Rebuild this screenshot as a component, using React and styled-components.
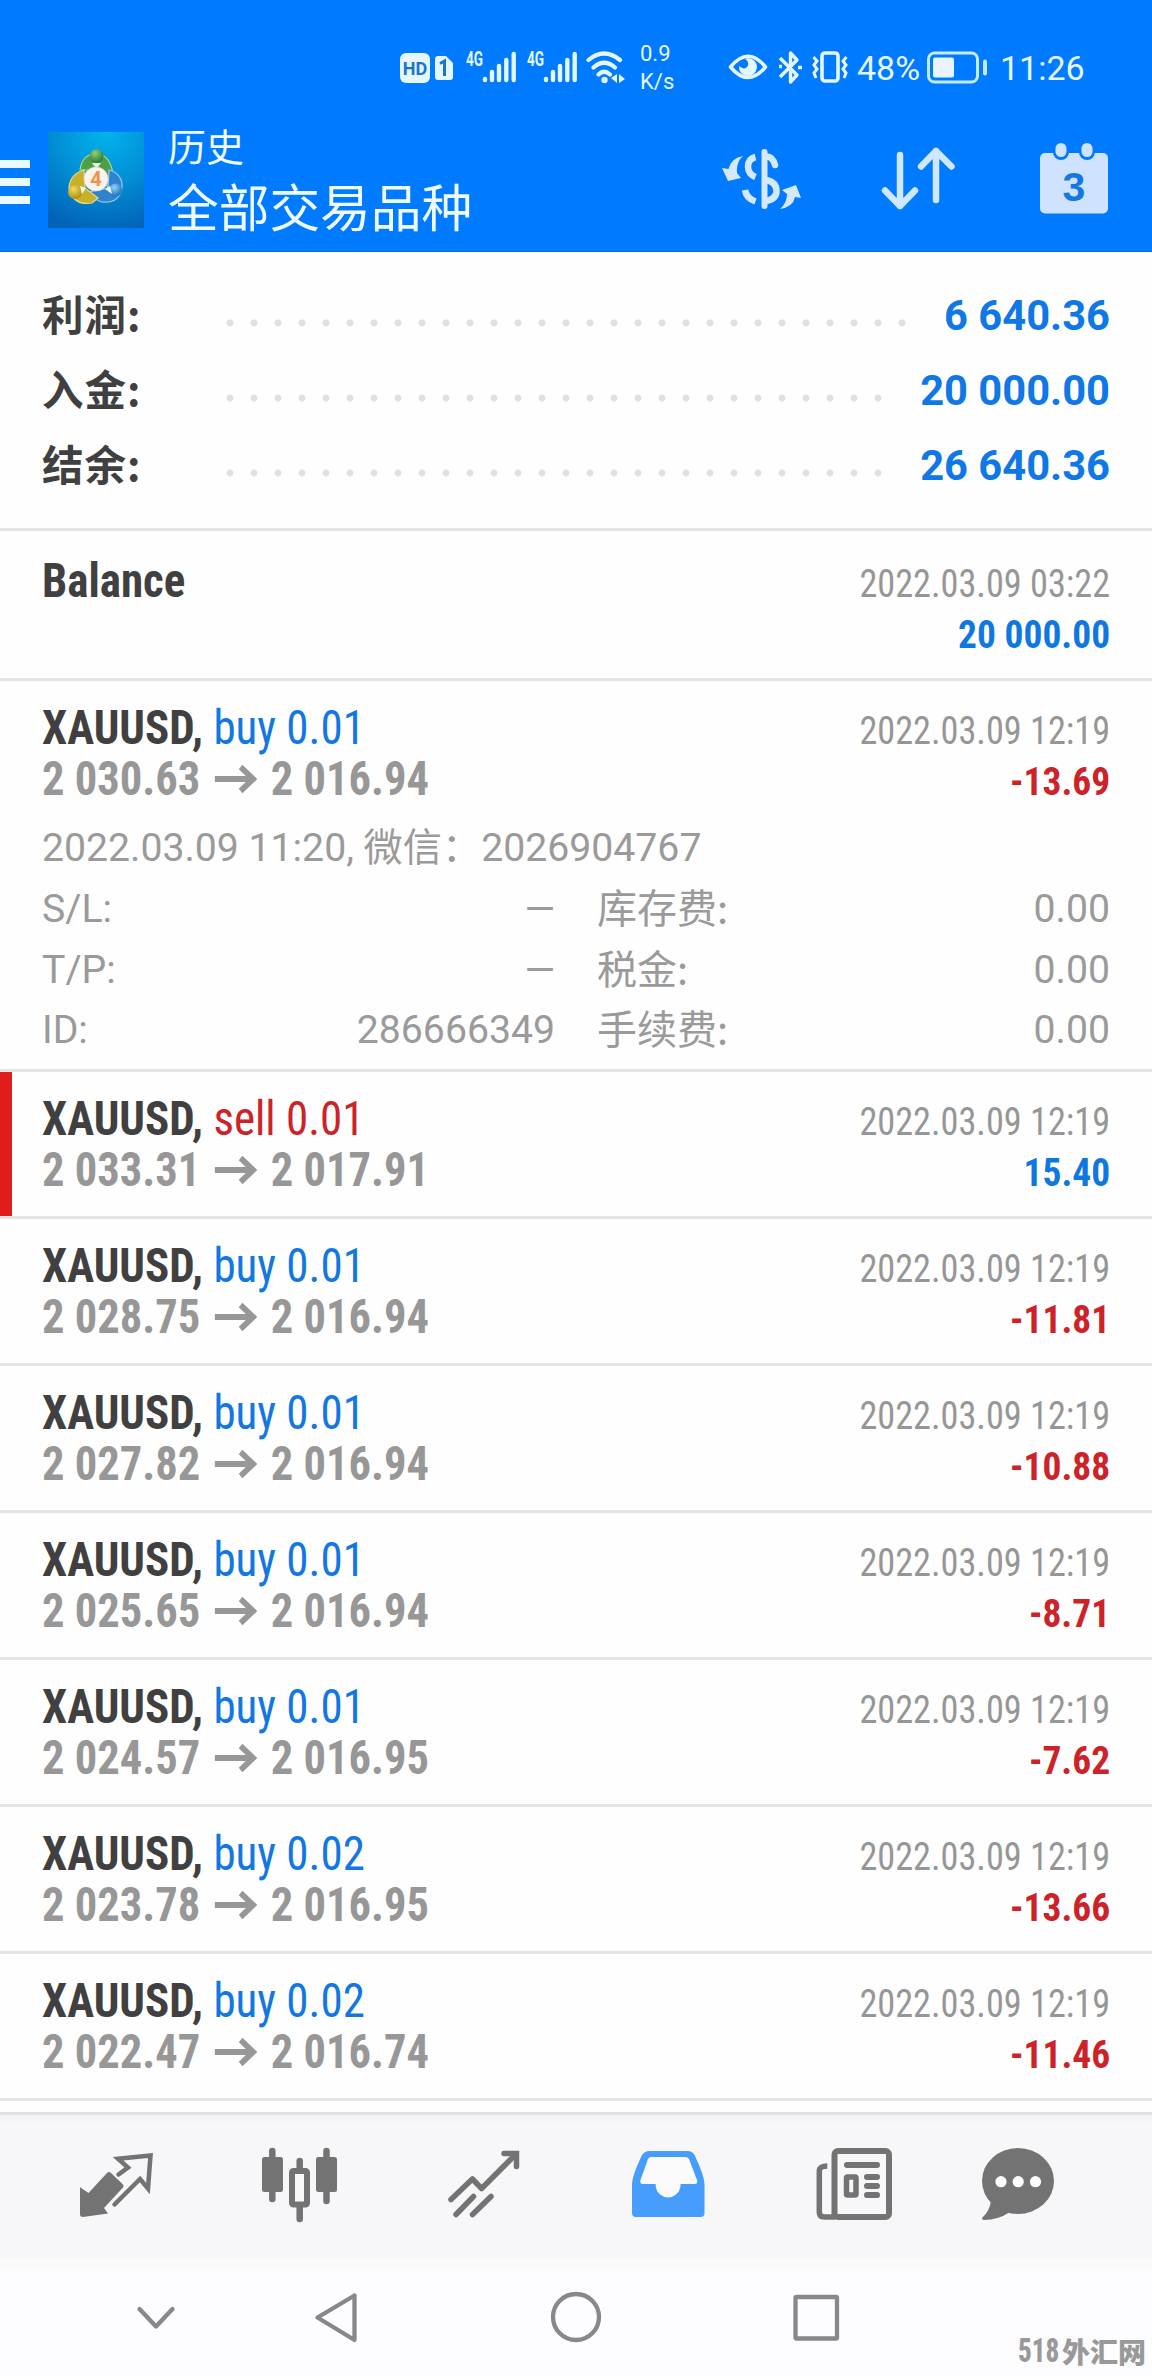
import React from "react";
import styled, { createGlobalStyle } from "styled-components";

const GlobalStyle = createGlobalStyle`
  * { box-sizing: border-box; }
  body { margin: 0; background: #fdfcfd; }
`;

const BLUE = "#007aff";
const sans = `Roboto, "Noto Sans CJK SC", sans-serif`;
const condensed = `"Roboto Condensed", Roboto, "Noto Sans CJK SC", sans-serif`;

const Screen = styled.div`
  position: relative;
  width: 1152px;
  height: 2376px;
  overflow: hidden;
  display: flex;
  flex-direction: column;
  background: #fefefe;
  font-family: ${sans};
  svg { display: block; flex: none; }
`;

/* ---------- status bar ---------- */
const StatusBar = styled.div`
  height: 108px;
  flex: none;
  padding: 28px 0 0 400px;
  display: flex;
  align-items: center;
  background: ${BLUE};
  color: #e4f6ff;
`;
const Slot = styled.div`
  flex: none;
  width: ${(p) => p.$w}px;
  margin-right: ${(p) => p.$gap || 0}px;
  white-space: nowrap;
`;
const HdBadge = styled.div`
  height: 30px;
  border-radius: 6px;
  background: #e4f6ff;
  color: #1c74c8;
  font: 700 18px/31px ${sans};
  text-align: center;
`;
const StatusText = styled.div`
  font-size: 34px;
  line-height: 40px;
`;
const Speed = styled.div`
  font-size: 22px;
  line-height: 28px;
`;

const Signal = () => (
  <svg width="52" height="42" viewBox="0 -3 52 42">
    <text x="1" y="16" fontSize="20" fontWeight="700" fontFamily="Roboto, sans-serif" textLength="17" lengthAdjust="spacingAndGlyphs" fill="#e4f6ff">4G</text>
    <g stroke="#e4f6ff" strokeWidth="4.4" strokeLinecap="round">
      <path d="M20 29v1M27 22v8M34 16v14M41.3 10v20M48.7 4v26" />
    </g>
  </svg>
);

/* ---------- app bar ---------- */
const AppBar = styled.div`
  height: 144px;
  flex: none;
  display: flex;
  align-items: center;
  background: ${BLUE};
  color: #eefcff;
  border-bottom: 1px solid #0b6fdc;
`;
const Burger = styled.div`
  width: 30px;
  height: 44px;
  margin: 4px 18px 0 0;
  display: flex;
  flex-direction: column;
  justify-content: space-between;
`;
const BurgerLine = styled.i`
  height: 8px;
  background: #e8faff;
`;
const Titles = styled.div`
  width: 554px;
  margin-left: 24px;
  padding-bottom: 9px;
`;
const Title = styled.div`
  font-family: "Noto Sans CJK SC", sans-serif;
  font-size: ${(p) => (p.$large ? 50.7 : 38)}px;
  line-height: 60px;
`;
const Action = styled.div`
  width: ${(p) => p.$w}px;
  margin-right: ${(p) => p.$gap}px;
  padding-bottom: 2px;
`;

const Logo = () => (
  <svg width="96" height="96" viewBox="0 0 96 96">
    <defs>
      <radialGradient id="sky" cx="60%" cy="0%" r="105%">
        <stop offset="0" stopColor="#02b4ec" />
        <stop offset=".5" stopColor="#028fd6" />
        <stop offset="1" stopColor="#0262b8" />
      </radialGradient>
      <radialGradient id="green" cx="40%" cy="30%" r="75%">
        <stop offset="0" stopColor="#8fcf7c" /><stop offset="1" stopColor="#1f7a2c" />
      </radialGradient>
      <radialGradient id="gold" cx="40%" cy="30%" r="75%">
        <stop offset="0" stopColor="#f3dc5a" /><stop offset="1" stopColor="#a98a10" />
      </radialGradient>
      <radialGradient id="azure" cx="40%" cy="30%" r="75%">
        <stop offset="0" stopColor="#8fd4fb" /><stop offset="1" stopColor="#1668b4" />
      </radialGradient>
    </defs>
    <rect width="96" height="96" fill="url(#sky)" />
    <path d="M32 38Q34 22 48 22T65 42L60 56L52 40L38 38Z" fill="#4f9f4a" stroke="#a9d590" strokeWidth="1.2" />
    <path d="M61 38Q75 42 74 56Q71 72 54 70Q46 68 41 60L60 56Z" fill="#2f83cc" stroke="#94cdf6" strokeWidth="1.2" />
    <path d="M36 38Q22 42 21 56Q25 74 44 71L50 66L37 56Z" fill="#c9b02a" stroke="#e8dc80" strokeWidth="1.2" />
    <circle cx="48.500" cy="24" r="7" fill="url(#green)" />
    <circle cx="27" cy="60" r="7" fill="url(#gold)" />
    <circle cx="67.500" cy="58" r="6.500" fill="url(#azure)" />
    <path d="M44 31h9l-4.500 6zM32 54l6 2-4 6zM62 54l2 8-7-5z" fill="#fff" opacity=".9" />
    <circle cx="48" cy="47" r="12" fill="#fdf4ee" stroke="#d8d8d0" strokeWidth=".8" />
    <text x="48" y="54" textAnchor="middle" fontFamily="Roboto, sans-serif" fontWeight="700" fontSize="20" fill="#f0924a">4</text>
  </svg>
);

const CurrencyIcon = () => (
  <svg width="80" height="64" viewBox="1 0 80 64" fill="none" stroke="#d4e9ff">
    <path d="M43.500 5v54" strokeWidth="6" strokeLinecap="round" />
    <path d="M34.500 10Q27 12 27 19.500Q27 27 34.500 30M24 43Q25 51 34.500 54.500" strokeWidth="6.500" />
    <path d="M46 9.500Q52 10 54 18" strokeWidth="6.500" strokeLinecap="round" />
    <path d="M45 33Q55.500 35 55.500 44Q55.500 52 45 54" strokeWidth="6.500" />
    <path d="M22 9Q10 11 7.500 22L1 21L7 34L20 31L16 26Q15 15 22 9ZM59 62Q72 60 74 50L80 51L75 38L61 43L66 47Q66 56 59 62Z" fill="#d4e9ff" stroke="none" />
  </svg>
);
const SortIcon = () => (
  <svg width="76" height="66" viewBox="0 0 76 66" fill="none" stroke="#d0e8ff" strokeWidth="6.500" strokeLinecap="round" strokeLinejoin="round">
    <path d="M20 9v51M5 44.500L20 60L35 44.500M56 54V5M41 20.500L56 5L71.500 20.500" />
  </svg>
);
const CalendarIcon = () => (
  <svg width="70" height="72" viewBox="0 0 70 72">
    <rect x="1" y="10" width="68" height="60.500" rx="5" fill="#cfe3ff" />
    <rect x="14" y="-3" width="16" height="20" rx="8" fill={BLUE} />
    <rect x="40" y="-3" width="16" height="20" rx="8" fill={BLUE} />
    <rect x="16.500" y="0" width="11" height="14" rx="5.500" fill="#cfe3ff" />
    <rect x="42.500" y="0" width="11" height="14" rx="5.500" fill="#cfe3ff" />
    <text x="35" y="57.500" textAnchor="middle" fontFamily="Liberation Sans, sans-serif" fontWeight="700" fontSize="41" fill="#1577e6">3</text>
  </svg>
);

/* ---------- summary ---------- */
const Summary = styled.div`
  height: 279px;
  flex: none;
  padding: 26px 42px 0;
  border-bottom: 3px solid #e4e4e4;
`;
const SummaryRow = styled.div`
  height: 75px;
  display: flex;
  line-height: 75px;
`;
const SummaryLabel = styled.div`
  width: 176px;
  font: 700 41.500px/71px "Noto Sans CJK SC", sans-serif;
  letter-spacing: 1px;
  color: #404040;
`;
const Dots = styled.div`
  flex: 1;
  margin-right: 31px;
  background: radial-gradient(circle at 12px 45px, #e0e0e0 0 3px, transparent 4px) repeat-x 0 0 / 24px 75px;
`;
const SummaryValue = styled.div`
  font-size: 41.700px;
  font-weight: 700;
  color: #0f78e6;
`;

/* ---------- history ---------- */
const Entry = styled.div`
  flex: none;
  padding: ${(p) => (p.$tall ? 24 : 21)}px 42px 0 ${(p) => (p.$marked ? 30 : 42)}px;
  border-left: ${(p) => (p.$marked ? "12px solid #e21b1b" : "none")};
  height: ${(p) => (p.$open ? 388 : p.$tall ? 147 : 144)}px;
`;
const Divider = styled.div`
  height: 3px;
  flex: none;
  background: #e4e4e4;
`;
const EntryMain = styled.div`
  display: flex;
  justify-content: space-between;
  height: 102px;
  line-height: 51px;
  white-space: nowrap;
  font-family: ${condensed};
  font-stretch: 75%;
`;
const Symbol = styled.div`
  font-size: 48px;
  font-weight: 700;
  color: #404040;
  transform: scaleX(0.937);
  transform-origin: 0 0;
`;
const Deal = styled.span`
  font-weight: 400;
  color: ${(p) => (p.$side === "sell" ? "#cc2228" : "#1277e2")};
`;
const Prices = styled.div`
  display: flex;
  align-items: center;
  height: 51px;
  font-size: 48px;
  font-weight: 700;
  color: #979797;
  transform: scaleX(0.928);
  transform-origin: 0 0;
  svg { margin: 1px 15px 0; }
`;
const EntrySide = styled.div`
  padding-top: 3px;
  text-align: right;
  font-size: 39.500px;
`;
const Time = styled.div`
  color: #969696;
  transform: scaleX(0.918);
  transform-origin: 100% 0;
`;
const Amount = styled.div`
  font-weight: 700;
  color: ${(p) => (p.$loss ? "#cc2228" : "#0f78e0")};
  transform: scaleX(0.948);
  transform-origin: 100% 0;
`;
const Details = styled.div`
  margin-top: 10px;
  display: grid;
  grid-template-columns: 513px 1fr;
  column-gap: 42px;
  font-size: 39.200px;
  line-height: 60.750px;
  color: #9a9a9a;
`;
const Comment = styled.div`
  grid-column: 1 / -1;
  white-space: pre;
`;
const Pair = styled.div`
  display: flex;
  justify-content: space-between;
  height: 60.750px;
`;
const Cjk = styled.span`
  font-family: "Noto Sans CJK SC", sans-serif;
`;
const FeeLabel = styled(Cjk)`
  font-size: 40px;
  line-height: 55px;
`;

/* ---------- bottom ---------- */
const ListEnd = styled.div`
  height: 11px;
  flex: none;
`;
const TabBar = styled.div`
  height: 159px;
  flex: none;
  display: flex;
  gap: 100px;
  padding: 27px 0 0 74px;
  border-top: 3px solid #e2e1e3;
  background: linear-gradient(#f4f3f4 0, #f7f6f8 10px, #f7f6f8 142px, #fbfafb 143px);
`;
const Tab = styled.div`
  width: 84px;
  height: 84px;
  margin-left: ${(p) => p.$shift || 0}px;
`;
const SystemNav = styled.div`
  height: 105px;
  flex: none;
  display: flex;
  gap: 180px;
  padding: 16px 0 0 126px;
  background: #fdfcfe;
`;
const SystemKey = styled.div`
  width: 60px;
  height: 60px;
  margin-right: ${(p) => p.$pull || 0}px;
`;
const Watermark = styled.div`
  position: absolute;
  right: 6px;
  bottom: 5px;
  display: flex;
  align-items: center;
  line-height: 40px;
  color: #999;
`;
const WatermarkDigits = styled.span`
  font: 800 33px/40px ${sans};
  font-stretch: 75%;
  margin-right: 3px;
  transform: scaleX(0.82);
  transform-origin: 100% 0;
`;
const WatermarkName = styled.span`
  font: 900 28px/40px "Noto Sans CJK SC", sans-serif;
`;

const Icon = ({ children, ...rest }) => (
  <svg width="84" height="84" viewBox="0 0 84 84" fill="#737373" {...rest}>{children}</svg>
);
const QuotesIcon = () => (
  <Icon>
    <path d="M6 45.300L14.500 51L33 31Q35 29 37 31L49 42.500Q50 44 49 45.500L30 66L34 71.500L9 75Q6 75 6 72Z" />
    <path d="M44.500 32.500L54 25.500L44 16.700L76.500 13.500L74 46.500L66 37L40.500 62.500" fill="none" stroke="#737373" strokeWidth="4.500" strokeLinecap="round" />
  </Icon>
);
const ChartIcon = () => (
  <Icon>
    <path d="M14.300 9v48M68.500 9v50M41.700 19v10M41.700 64v13" stroke="#737373" strokeWidth="6.500" strokeLinecap="round" />
    <rect x="4" y="15" width="21" height="35" rx="2.500" />
    <rect x="58" y="15" width="21" height="35" rx="2.500" />
    <rect x="34" y="29" width="15" height="33.500" rx="1.500" fill="#f9f9fa" stroke="#737373" strokeWidth="6" />
  </Icon>
);
const TradeIcon = () => (
  <Icon fill="none" stroke="#737373" strokeWidth="5.500" strokeLinecap="round">
    <path d="M9 57.500L30.400 37L39.600 46.500L74 12M31.500 54.500L14 72.500M49 54.500L30.500 72.500" strokeLinejoin="round" />
    <path d="M62 11.500H74.500V24.500" />
  </Icon>
);
const InboxIcon = () => (
  <Icon>
    <path d="M24 9H61Q67 9 69 14Q78 33 78.500 42V71Q78.500 75 74.500 75H10Q6 75 6 71V42Q6.500 33 15.500 14Q18 9 24 9Z" fill="#469dfb" />
    <path d="M25 15H59Q62 15 63 17L71 38Q72 42 69 42H54.500V44.500A12.500 12.500 0 0 1 29.700 44.500V42H17Q13.500 42 14.500 38L22 17Q23 15 25 15Z" fill="#fbfafa" />
  </Icon>
);
const NewsIcon = () => (
  <Icon fill="none" stroke="#737373">
    <rect x="24.500" y="9" width="54.500" height="66" rx="3.500" strokeWidth="6" />
    <path d="M17.300 24Q9.300 24 9.300 29V70Q9.300 75 14 75H25" strokeWidth="5.500" />
    <path d="M37 23H67M57 35H67M57 44H67M57 53H67" strokeWidth="6" strokeLinecap="round" />
    <rect x="36.500" y="35" width="9.500" height="18" rx="1" strokeWidth="5.500" />
  </Icon>
);
const ChatIcon = () => (
  <Icon>
    <ellipse cx="42" cy="39" rx="36" ry="33" />
    <path d="M15 58Q14 69 6 76Q6 78 8 78Q22 78 34 70Z" />
    <g fill="#fff"><circle cx="25" cy="39.700" r="5.600" /><circle cx="42.200" cy="39.700" r="5.600" /><circle cx="59.500" cy="39.700" r="5.600" /></g>
  </Icon>
);
const KeyIcon = ({ children }) => (
  <svg width="60" height="60" viewBox="0 0 60 60" fill="none" stroke="#888" strokeWidth="4.300" strokeLinecap="round" strokeLinejoin="round">{children}</svg>
);
const Arrow = () => (
  <svg width="46" height="30" viewBox="0 0 46 30" fill="none" stroke="#979797" strokeWidth="6">
    <path d="M0 15H41M28 3L41.500 15L28 27" />
  </svg>
);

const summary = [
  ["利润:", "6 640.36"],
  ["入金:", "20 000.00"],
  ["结余:", "26 640.36"],
];

const deals = [
  {
    side: "buy", lots: "0.01", from: "2 030.63", to: "2 016.94", amount: "-13.69",
    details: {
      opened: "2022.03.09 11:20, ", note: "微信：", contact: "2026904767",
      rows: [["S/L:", "—", "库存费:", "0.00"], ["T/P:", "—", "税金:", "0.00"], ["ID:", "286666349", "手续费:", "0.00"]],
    },
  },
  { side: "sell", lots: "0.01", from: "2 033.31", to: "2 017.91", amount: "15.40" },
  { side: "buy", lots: "0.01", from: "2 028.75", to: "2 016.94", amount: "-11.81" },
  { side: "buy", lots: "0.01", from: "2 027.82", to: "2 016.94", amount: "-10.88" },
  { side: "buy", lots: "0.01", from: "2 025.65", to: "2 016.94", amount: "-8.71" },
  { side: "buy", lots: "0.01", from: "2 024.57", to: "2 016.95", amount: "-7.62" },
  { side: "buy", lots: "0.02", from: "2 023.78", to: "2 016.95", amount: "-13.66" },
  { side: "buy", lots: "0.02", from: "2 022.47", to: "2 016.74", amount: "-11.46" },
];

const DealEntry = ({ deal }) => (
  <>
    <Entry $marked={deal.side === "sell"} $open={!!deal.details}>
      <EntryMain>
        <div>
          <Symbol>XAUUSD, <Deal $side={deal.side}>{deal.side} {deal.lots}</Deal></Symbol>
          <Prices><span>{deal.from}</span><Arrow /><span>{deal.to}</span></Prices>
        </div>
        <EntrySide>
          <Time>2022.03.09 12:19</Time>
          <Amount $loss={deal.amount.startsWith("-")}>{deal.amount}</Amount>
        </EntrySide>
      </EntryMain>
      {deal.details && (
        <Details>
          <Comment>{deal.details.opened}<Cjk>{deal.details.note}</Cjk>{deal.details.contact}</Comment>
          {deal.details.rows.map(([a, b, c, d]) => (
            <React.Fragment key={a}>
              <Pair><span>{a}</span><span>{b}</span></Pair>
              <Pair><FeeLabel>{c}</FeeLabel><span>{d}</span></Pair>
            </React.Fragment>
          ))}
        </Details>
      )}
    </Entry>
    <Divider />
  </>
);

export default function App() {
  return (
    <Screen>
      <GlobalStyle />
      <StatusBar>
        <Slot $w={30} $gap={5}><HdBadge>HD</HdBadge></Slot>
        <Slot $w={18} $gap={12}>
          <svg width="18" height="24" viewBox="0 0 18 24">
            <path d="M3 0H11L18 7V21Q18 24 15 24H3Q0 24 0 21V3Q0 0 3 0Z" fill="#e4f6ff" />
            <path d="M5 7.500L9.500 5V20" fill="none" stroke="#1c74c8" strokeWidth="3" />
          </svg>
        </Slot>
        <Slot $w={52} $gap={9}><Signal /></Slot>
        <Slot $w={52} $gap={8}><Signal /></Slot>
        <Slot $w={40} $gap={14}>
          <svg width="40" height="36" viewBox="0 0 40 36" fill="none" stroke="#e4f6ff" strokeWidth="4.200" strokeLinecap="round">
            <path d="M2.500 10Q18 -3 34 10M7.500 17.500Q18 8 29 17.500M12.500 24.500Q18 19 24 24.500" />
            <circle cx="18.500" cy="30" r="3.200" fill="#e4f6ff" stroke="none" />
            <path d="M31 24v9l-6-5zM33 33v-9l6 5z" fill="#e4f6ff" stroke="none" />
          </svg>
        </Slot>
        <Slot $w={34} $gap={54}><Speed>0.9<br />K/s</Speed></Slot>
        <Slot $w={40} $gap={10}>
          <svg width="40" height="36" viewBox="0 0 40 36" fill="none" stroke="#e4f6ff" strokeWidth="3.600">
            <path d="M2.500 17Q20 -4.500 37.500 17Q20 38 2.500 17Z" strokeLinejoin="round" />
            <path d="M20 8A9 9 0 1 1 11 16Q17 21 20 15.500Q21 11 17 9Z" fill="#e4f6ff" stroke="none" />
          </svg>
        </Slot>
        <Slot $w={24} $gap={10}>
          <svg width="24" height="36" viewBox="0 0 24 36" fill="none" stroke="#e4f6ff" strokeWidth="3.400" strokeLinejoin="round">
            <path d="M2 8L19 25L12.500 32V3L19 10L2 27" />
            <path d="M1 16.500h3M20 17.500h4" />
          </svg>
        </Slot>
        <Slot $w={36} $gap={9}>
          <svg width="36" height="36" viewBox="0 0 36 36" fill="none" stroke="#e4f6ff" strokeWidth="3.600">
            <rect x="10" y="3" width="16" height="28" rx="3" />
            <path d="M1.500 7L5 11L2 15L5 19L2 23L4 28M34.500 7L31 11L34 15L31 19L34 23L32 28" strokeWidth="3" />
          </svg>
        </Slot>
        <Slot $w={70}><StatusText>48%</StatusText></Slot>
        <Slot $w={60} $gap={13}>
          <svg width="60" height="36" viewBox="0 0 60 36">
            <rect x="1.500" y="3" width="49" height="29" rx="6" fill="none" stroke="#c5eaff" strokeWidth="3" />
            <rect x="6" y="7.500" width="21" height="20" rx="2" fill="#e9f4ff" />
            <rect x="56" y="9.500" width="4" height="16" rx="2" fill="#c5eaff" />
          </svg>
        </Slot>
        <Slot $w={90}><StatusText>11:26</StatusText></Slot>
      </StatusBar>

      <AppBar>
        <Burger><BurgerLine /><BurgerLine /><BurgerLine /></Burger>
        <Logo />
        <Titles>
          <Title>历史</Title>
          <Title $large>全部交易品种</Title>
        </Titles>
        <Action $w={80} $gap={78}><CurrencyIcon /></Action>
        <Action $w={76} $gap={83}><SortIcon /></Action>
        <Action $w={70} $gap={0}><CalendarIcon /></Action>
      </AppBar>

      <Summary>
        {summary.map(([label, value]) => (
          <SummaryRow key={label}>
            <SummaryLabel>{label}</SummaryLabel>
            <Dots />
            <SummaryValue>{value}</SummaryValue>
          </SummaryRow>
        ))}
      </Summary>

      <Entry $tall>
        <EntryMain>
          <Symbol>Balance</Symbol>
          <EntrySide>
            <Time>2022.03.09 03:22</Time>
            <Amount>20 000.00</Amount>
          </EntrySide>
        </EntryMain>
      </Entry>
      <Divider />
      {deals.map((deal) => <DealEntry key={deal.from} deal={deal} />)}
      <ListEnd />

      <TabBar>
        <Tab><QuotesIcon /></Tab>
        <Tab><ChartIcon /></Tab>
        <Tab><TradeIcon /></Tab>
        <Tab><InboxIcon /></Tab>
        <Tab><NewsIcon /></Tab>
        <Tab $shift={-18}><ChatIcon /></Tab>
      </TabBar>
      <SystemNav>
        <SystemKey $pull={-60}><KeyIcon><path d="M13.500 22L30 39.500L46.500 22" /></KeyIcon></SystemKey>
        <SystemKey><KeyIcon><path d="M48.500 8.500V53L11.500 30.500Z" /></KeyIcon></SystemKey>
        <SystemKey><KeyIcon><circle cx="30" cy="30" r="23" /></KeyIcon></SystemKey>
        <SystemKey><KeyIcon><rect x="9.500" y="10" width="41.500" height="41.500" rx="1" /></KeyIcon></SystemKey>
      </SystemNav>
      <Watermark><WatermarkDigits>518</WatermarkDigits><WatermarkName>外汇网</WatermarkName></Watermark>
    </Screen>
  );
}
